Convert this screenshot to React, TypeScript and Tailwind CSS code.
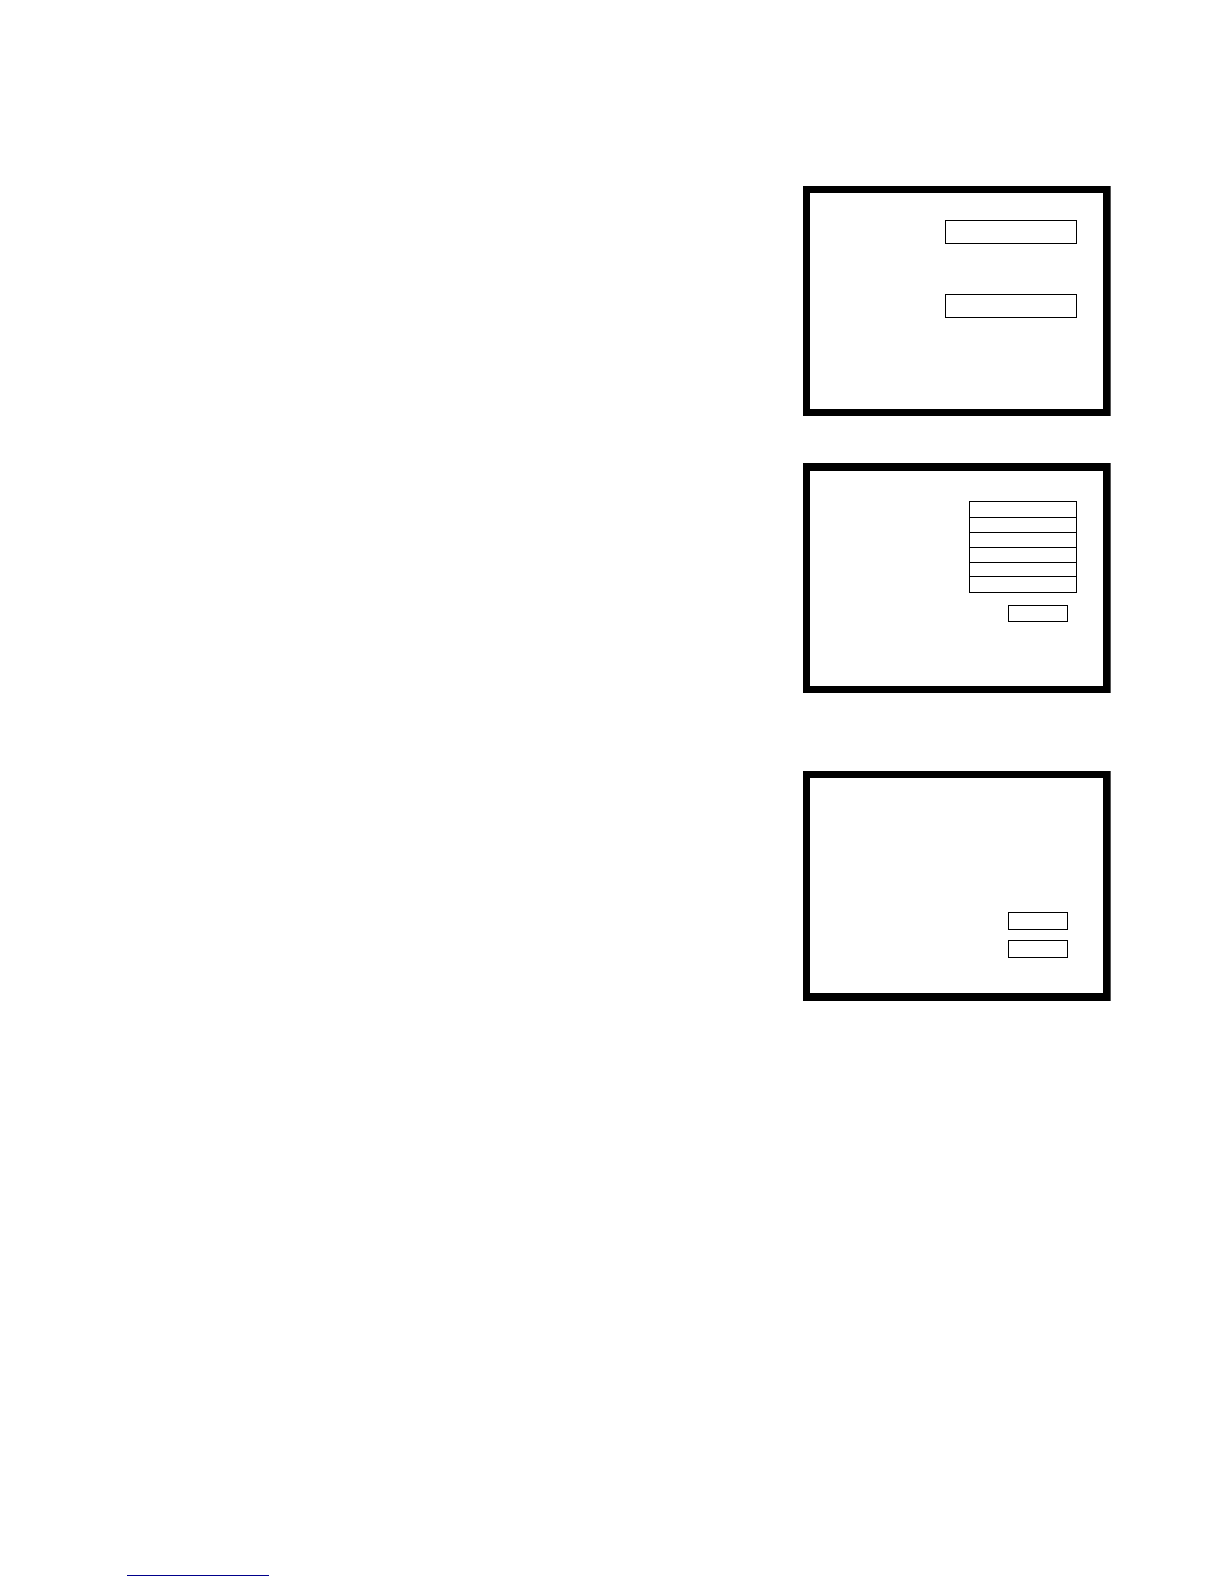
import type { ReactNode } from "react";
import clsx from "clsx";

type ScreenProps = {
  label: string;
  className?: string;
  children: ReactNode;
};

type FieldProps = {
  label: string;
  className?: string;
};

const MENU_ROWS = ["h-[17px]", "h-4", "h-4", "h-4", "h-[15px]", "h-[17px]"];

const Screen = ({ label, className, children }: ScreenProps) => {
  return (
    <section aria-label={label} className="w-[308px] border-r border-[#555555]">
      <div
        className={clsx(
          "flex flex-col items-end border-[7px] border-black",
          className
        )}
      >
        {children}
      </div>
    </section>
  );
};

const Field = ({ label, className }: FieldProps) => {
  return (
    <input
      type="text"
      aria-label={label}
      className={clsx(
        "block border border-black bg-white px-1 font-['Liberation_Sans',sans-serif] text-xs outline-none",
        className
      )}
    />
  );
};

const App = () => {
  return (
    <div className="flex min-h-screen flex-col bg-white pb-2">
      <main className="flex flex-col items-end pr-[113px] pt-[186px]">
        <Screen label="Entry screen" className="gap-[50px] pb-[91px] pr-[26px] pt-[27px]">
          <Field label="First entry" className="h-6 w-[132px]" />
          <Field label="Second entry" className="h-6 w-[132px]" />
        </Screen>

        <div className="mt-[47px]">
          <Screen label="Menu screen" className="border-t-8 pb-16 pr-[26px] pt-[30px]">
            {/* Neighbouring rows share one border */}
            <ul className="w-[108px]">
              {MENU_ROWS.map((height, index) => (
                <li
                  key={index}
                  className={clsx("border border-black", height, index > 0 && "-mt-px")}
                />
              ))}
            </ul>
            <Field label="Menu value" className="mr-[9px] mt-3 h-[17px] w-[60px]" />
          </Screen>
        </div>

        <div className="mt-[78px]">
          <Screen label="Value screen" className="gap-[10px] border-b-8 pb-[35px] pr-[35px] pt-[134px]">
            <Field label="Upper value" className="h-[18px] w-[60px]" />
            <Field label="Lower value" className="h-[18px] w-[60px]" />
          </Screen>
        </div>
      </main>

      <footer className="mt-[574px] pl-[127px]">
        <a
          href="#top"
          aria-label="Back to top"
          className="block w-[142px] border-b border-[#00008b]"
        />
      </footer>
    </div>
  );
};

export default App;
